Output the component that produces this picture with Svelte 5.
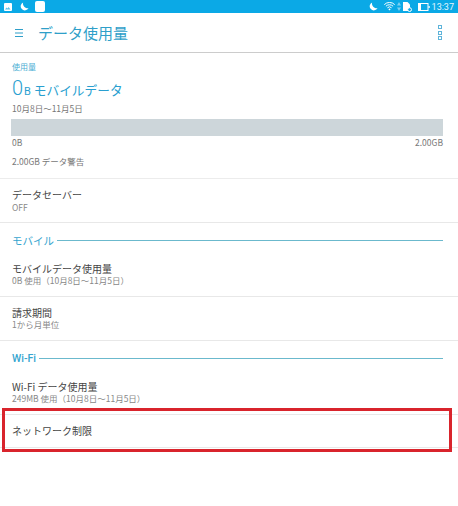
<script>
  const mobileRows = [
    { title: 'モバイルデータ使用量', sub: '0B 使用（10月8日〜11月5日）' },
    { title: '請求期間', sub: '1から月単位' }
  ];
</script>

<div class="screen">
  <div class="status">
    <div class="status-left">
      <svg width="8" height="8" viewBox="0 0 8 8"><rect width="8" height="8" rx="1" fill="#fff"/><path d="M1 6.5l1.5-2 1 1 1-1.5 2 2.5z" fill="#5cc3ec"/></svg>
      <svg class="moon" width="9" height="9" viewBox="0 0 10 10"><path d="M3.5.5a4.6 4.6 0 1 0 6 6.2A5 5 0 0 1 3.5.5z" fill="#fff"/></svg>
      <span class="white-box"></span>
    </div>
    <div class="status-right">
      <svg class="moon-r" width="9" height="9" viewBox="0 0 10 10"><path d="M3.5.5a4.6 4.6 0 1 0 6 6.2A5 5 0 0 1 3.5.5z" fill="#fff"/></svg>
      <svg class="wifi" width="11" height="9" viewBox="0 0 11 9"><path d="M.3 2.6a7.4 7.4 0 0 1 10.4 0M1.9 4.2a5.2 5.2 0 0 1 7.2 0M3.4 5.8a3 3 0 0 1 4.2 0" fill="none" stroke="#fff" stroke-width="1"/><path d="M4.4 7.2a1.5 1.5 0 0 1 2.2 0L5.5 8.6z" fill="#fff"/></svg>
      <svg class="arrows" width="4" height="9" viewBox="0 0 4 9"><path d="M2 0l2 3.4H0zM2 9L0 5.6h4z" fill="#7fd0f0"/></svg>
      <svg class="sim" width="9" height="10" viewBox="0 0 9 10"><path d="M0 0h4.5L7 2.5V5.5L5 9H0z" fill="#fff"/><circle cx="6.6" cy="7.6" r="1.9" fill="#0ba9e6" stroke="#fff" stroke-width="1"/></svg>
      <svg class="battery" width="12" height="8" viewBox="0 0 12 8"><rect x=".5" y=".5" width="9.5" height="7" fill="none" stroke="#fff"/><rect x="1" y="1" width="2" height="6" fill="#fff"/><rect x="10.5" y="3" width="1.2" height="2" fill="#fff"/></svg>
      <span class="time">13:37</span>
    </div>
  </div>

  <header class="appbar">
    <svg class="menu" width="8" height="8" viewBox="0 0 8 8"><path d="M0 .5h8M0 4h8M0 7.5h8" stroke="#2f9fc9" stroke-width="1"/></svg>
    <span class="page-title">データ使用量</span>
    <span class="more"><i></i><i></i><i></i></span>
  </header>

  <section class="usage">
    <div class="usage-label">使用量</div>
    <div class="usage-big"><span class="zero">0</span><span class="unit">B</span> モバイルデータ</div>
    <div class="small dates">10月8日〜11月5日</div>
    <div class="bar"></div>
    <div class="small bar-ends"><span>0B</span><span>2.00GB</span></div>
    <div class="small warn">2.00GB データ警告</div>
  </section>

  <div class="row saver">
    <div class="row-title">データセーバー</div>
    <div class="row-sub">OFF</div>
  </div>

  <div class="cat"><span>モバイル</span><b></b></div>
  {#each mobileRows as r, i}
    <div class="row" class:first={i === 0}>
      <div class="row-title">{r.title}</div>
      <div class="row-sub">{r.sub}</div>
    </div>
  {/each}

  <div class="cat wifi-cat"><span>Wi-Fi</span><b></b></div>
  <div class="row first">
    <div class="row-title">Wi-Fi データ使用量</div>
    <div class="row-sub">249MB 使用（10月8日〜11月5日）</div>
  </div>
  <div class="row single"><div class="row-title">ネットワーク制限</div></div>

  <div class="highlight"></div>
</div>

<style>
  :global(body) {
    margin: 0;
    background: #fff;
  }

  .screen {
    position: relative;
    width: 458px;
    height: 506px;
    overflow: hidden;
    background: #fff;
    font-family: "Noto Sans CJK JP", "Roboto", sans-serif;
    color: #333;
  }

  .status {
    height: 13px;
    background: #0ba9e6;
    display: flex;
    align-items: center;
    justify-content: space-between;
    padding: 0 4px;
  }

  .status-left, .status-right {
    display: flex;
    align-items: center;
  }

  .moon { margin-left: 8px; }
  .white-box {
    width: 10px;
    height: 11px;
    margin-left: 6px;
    border-radius: 2px;
    background: #fff;
  }
  .wifi { margin-left: 6px; }
  .arrows { margin-left: 2px; }
  .sim { margin-left: 2px; }
  .battery { margin-left: 6px; }
  .time {
    margin-left: 2px;
    font: 9px "Roboto", sans-serif;
    color: #e6f6fd;
  }

  .appbar {
    height: 39px;
    display: flex;
    align-items: center;
    padding: 0 16px 0 15px;
    border-bottom: 1px solid #ccc;
  }

  .menu { margin-right: 15px; }
  .page-title {
    flex: 1;
    font-size: 15px;
    color: #2f9fc9;
  }
  .more {
    display: flex;
    flex-direction: column;
    gap: 1.5px;
  }
  .more i {
    width: 2px;
    height: 2px;
    border: .5px solid #5fb4da;
  }

  .usage {
    height: 126px;
    padding: 7px 12px 0 12px;
    box-sizing: border-box;
    border-bottom: 1px solid #ececec;
  }
  .usage-label {
    font-size: 8px;
    line-height: 13px;
    color: #4aaed4;
  }
  .usage-big {
    font-size: 12.7px;
    line-height: 22px;
    margin-top: 4px;
    color: #2a9fd0;
  }
  .zero { font: 300 20px/22px "Roboto", sans-serif; }
  .unit { font: 400 11px "Roboto", sans-serif; margin-left: 1px; }

  .small {
    font-size: 8.5px;
    line-height: 12px;
    color: #777;
  }
  .dates { margin-top: 1px; }
  .bar {
    height: 17px;
    margin-top: 5px;
    margin-left: -1px;
    margin-right: 3px;
    background: #cdd6da;
  }
  .bar-ends {
    display: flex;
    justify-content: space-between;
    margin-right: 3px;
  }
  .warn { margin-top: 7px; }

  .row {
    height: 44px;
    box-sizing: border-box;
    padding: 9px 12px 0;
    border-bottom: 1px solid #e8e8e8;
  }
  .row.first { height: 39px; padding-top: 4px; }
  .row.single {
    height: 33px;
  }
  .row-title {
    font-size: 10px;
    line-height: 13px;
    color: #444;
  }
  .row-sub {
    font-size: 8.5px;
    line-height: 10px;
    color: #888;
  }
  .saver .row-sub { margin-top: 1px; }

  .cat {
    height: 35px;
    display: flex;
    align-items: center;
    padding: 0 15px 0 12px;
    gap: 3px;
    font-size: 10.5px;
    color: #35a5cf;
  }
  .cat b {
    flex: 1;
    height: 1px;
    background: #6bb9cd;
  }
  .wifi-cat { font: 500 10.5px "Roboto", sans-serif; }

  .highlight {
    position: absolute;
    left: 2px;
    top: 408px;
    width: 444px;
    height: 38px;
    border: 3px solid #d9242c;
  }
</style>
